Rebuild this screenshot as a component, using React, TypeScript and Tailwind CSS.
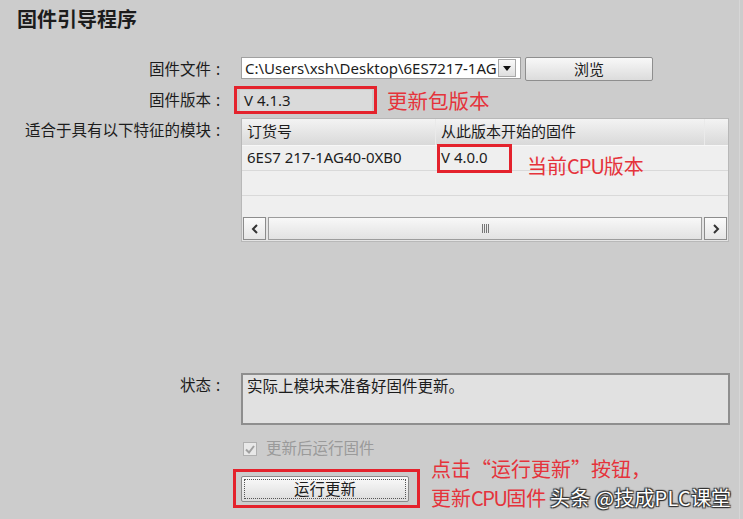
import React from "react";

function Label({ children }: { children: React.ReactNode }) {
  return (
    <div className="flex w-[225px] shrink-0 justify-end text-[15.5px] leading-[24px] text-[#1c1c1c]">
      <span>{children}</span>
      <span className="w-[14px] text-center">:</span>
    </div>
  );
}

function RedBox({ className }: { className: string }) {
  return <div className={`pointer-events-none absolute border-[3px] border-[#e4222c] ${className}`} />;
}

function Chevron({ dir }: { dir: "left" | "right" }) {
  return (
    <svg width="8" height="10" viewBox="0 0 8 10">
      <path
        d={dir === "left" ? "M6 1 L2 5 L6 9" : "M2 1 L6 5 L2 9"}
        fill="none"
        stroke="#333"
        strokeWidth="2"
      />
    </svg>
  );
}

export default function App() {
  return (
    <div className="relative w-[743px] h-[519px] overflow-hidden bg-[#cccccc] text-[#1c1c1c] font-['Noto_Sans','Noto_Sans_CJK_SC',sans-serif]">
      <div className="absolute right-[3px] top-0 bottom-0 w-[1px] bg-[#d6d6d6]" />

      <div className="pt-[6px] pl-[17px] h-[32px] text-[20px] font-bold leading-[26px] font-['Noto_Sans_CJK_SC',sans-serif]">
        固件引导程序
      </div>

      {/* firmware file */}
      <div className="mt-[25px] flex h-[24px]">
        <Label>固件文件</Label>
        <div className="ml-[16px] flex items-start gap-[4px]">
          <div className="flex h-[22px] w-[280px] items-center border border-[#a0a0a0] bg-white">
            <div className="w-[255px] overflow-hidden whitespace-nowrap pl-[3px] text-[15px] leading-[20px]">
              C:\Users\xsh\Desktop\6ES7217-1AG
            </div>
            <div className="ml-[1px] flex h-[18px] w-[18px] items-center justify-center border border-[#a8a8a8] bg-gradient-to-b from-[#fafafa] to-[#dedede]">
              <svg width="8" height="5" viewBox="0 0 8 5">
                <path d="M0 0 H8 L4 5 Z" fill="#111" />
              </svg>
            </div>
          </div>
          <button className="h-[24px] w-[128px] rounded-[2px] border border-[#8e8e8e] bg-gradient-to-b from-[#f8f8f8] to-[#dcdcdc] text-[15px] leading-[20px] text-[#1c1c1c]">
            浏览
          </button>
        </div>
      </div>

      {/* firmware version */}
      <div className="mt-[7px] flex h-[24px] items-center">
        <Label>固件版本</Label>
        <div className="relative ml-[15px] h-[21px] w-[132px] bg-[#dadada] pl-[4px] text-[15px] leading-[21px]">
          V 4.1.3
          <RedBox className="-left-[6px] -right-[5px] -top-[4px] -bottom-[3px]" />
        </div>
        <div className="ml-[15px] text-[20.5px] leading-[24px] text-[#e5333b] font-['Noto_Sans_CJK_SC',sans-serif]">
          更新包版本
        </div>
      </div>

      {/* modules table */}
      <div className="mt-[6px] flex">
        <Label>适合于具有以下特征的模块</Label>
        <div className="relative ml-[16px] flex h-[124px] w-[488px] flex-col border border-[#b8b8b8] bg-[#efefef] text-[15px]">
          <div className="flex h-[27px] shrink-0 border-b border-[#f7f7f7] bg-gradient-to-b from-[#f3f3f3] to-[#d9d9d9] leading-[25px]">
            <div className="w-[194px] border-r border-[#eaeaea] pl-[5px]">订货号</div>
            <div className="w-[269px] border-r border-[#eaeaea] pl-[5px]">从此版本开始的固件</div>
            <div className="flex-1" />
          </div>
          <div className="flex h-[25px] shrink-0 border-b border-[#d9d9d9] leading-[23px]">
            <div className="w-[194px] pl-[5px]">6ES7 217-1AG40-0XB0</div>
            <div className="relative pl-[5px]">
              V 4.0.0
              <RedBox className="left-[1px] -top-[2px] h-[29px] w-[75px]" />
            </div>
          </div>
          <div className="h-[25px] shrink-0 border-b border-[#d9d9d9]" />
          <div className="flex-1" />
          <div className="flex h-[24px] shrink-0 items-stretch gap-[2px] bg-[#e4e4e4] px-[1px] pb-[1px]">
            <div className="flex w-[23px] items-center justify-center border border-[#8c8c8c] bg-gradient-to-b from-[#fbfbfb] to-[#e6e6e6]">
              <Chevron dir="left" />
            </div>
            <div className="flex flex-1 items-center justify-center border border-[#9c9c9c] bg-gradient-to-b from-[#f8f8f8] to-[#e2e2e2]">
              <svg width="7" height="9" viewBox="0 0 7 9">
                <path d="M0.5 0 V9 M2.5 0 V9 M4.5 0 V9 M6.5 0 V9" stroke="#777" strokeWidth="1" />
              </svg>
            </div>
            <div className="flex w-[23px] items-center justify-center border border-[#8c8c8c] bg-gradient-to-b from-[#fbfbfb] to-[#e6e6e6]">
              <Chevron dir="right" />
            </div>
          </div>
          <div className="absolute left-[285px] top-[34px] text-[20px] leading-[26px] text-[#e5333b] font-['Noto_Sans_CJK_SC',sans-serif]">
            当前<span className="tracking-[-1px]">CPU</span>版本
          </div>
        </div>
      </div>

      {/* status */}
      <div className="mt-[131px] flex">
        <Label>状态</Label>
        <div className="ml-[16px] h-[52px] w-[489px] border-2 border-[#8e8e8e] bg-[#e1e1e1] pl-[4px] text-[15.5px] leading-[23px]">
          实际上模块未准备好固件更新。
        </div>
      </div>

      {/* run after update */}
      <div className="mt-[12px] flex h-[24px] items-center pl-[243px]">
        <div className="flex h-[14px] w-[14px] items-center justify-center border border-[#b0b0b0] bg-[#e8e8e8]">
          <svg width="10" height="9" viewBox="0 0 10 9">
            <path d="M1 4.5 L4 7.5 L9 1" fill="none" stroke="#a0a0a0" strokeWidth="2" />
          </svg>
        </div>
        <span className="ml-[9px] text-[15.5px] text-[#9a9a9a]">更新后运行固件</span>
      </div>

      {/* run update */}
      <div className="mt-[15px] flex pl-[241px]">
        <div className="relative">
          <button className="relative h-[26px] w-[168px] rounded-[2px] border border-[#8a8a8a] bg-gradient-to-b from-[#fafafa] to-[#dcdcdc] text-[15.5px] leading-[20px] text-[#1c1c1c]">
            <span className="absolute inset-[2px] border border-dotted border-[#555]" />
            运行更新
          </button>
          <RedBox className="-left-[8px] -right-[11px] -top-[7px] -bottom-[6px]" />
        </div>
      </div>

      <div className="absolute left-[431px] top-[456px] text-[20px] leading-[26px] text-[#e5333b] font-['Noto_Sans_CJK_SC',sans-serif]">
        点击“运行更新”按钮，
      </div>
      <div className="absolute left-[431px] top-[485px] text-[20px] leading-[26px] text-[#e5333b] font-['Noto_Sans_CJK_SC',sans-serif]">
        更新<span className="tracking-[-1.5px]">CPU</span>固件
      </div>

      <div className="absolute left-[550px] top-[485px] text-[20px] leading-[26px] tracking-[0.2px] text-white font-['Noto_Sans_CJK_SC',sans-serif] [text-shadow:0_0_1px_#222,1px_1px_1px_#333,-1px_-1px_1px_#333,1px_-1px_1px_#333,-1px_1px_1px_#333]">
        头条 @技成PLC课堂
      </div>
    </div>
  );
}
